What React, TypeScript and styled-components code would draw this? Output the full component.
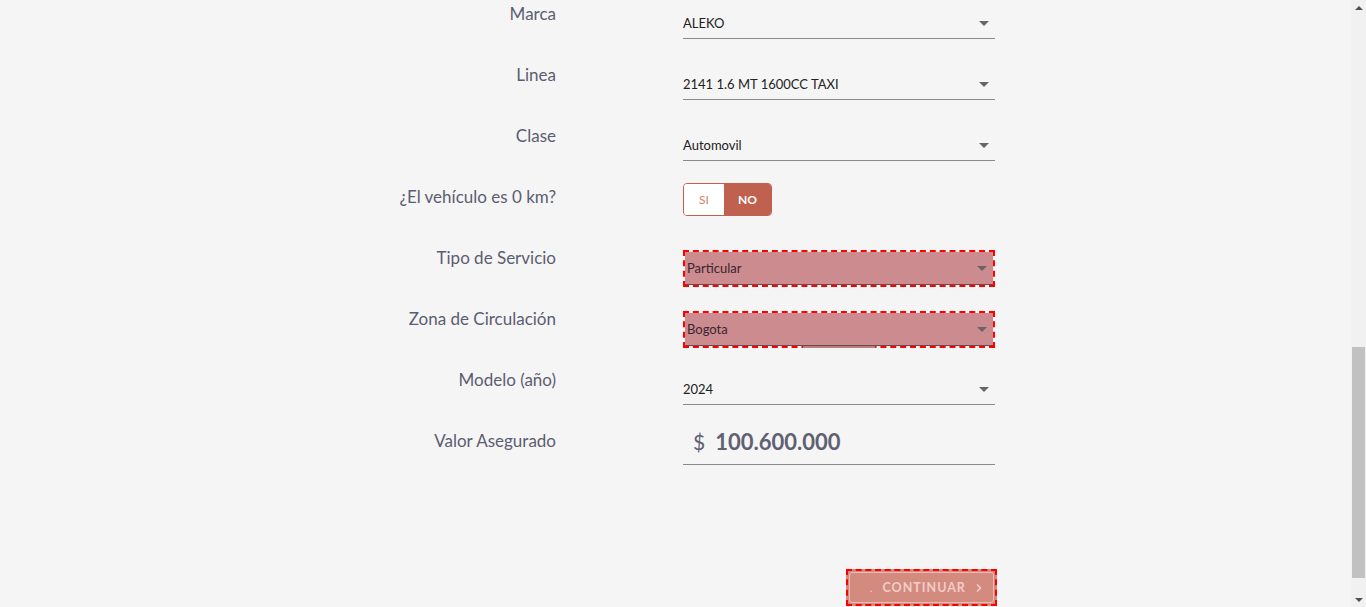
import { FC, useLayoutEffect, useRef } from "react";
import styled, { createGlobalStyle, css } from "styled-components";

const GlobalStyle = createGlobalStyle`
  html, body {
    margin: 0;
    padding: 0;
    background: #f5f5f5;
    font-family: "Source Sans Pro", Lato, "Liberation Sans", sans-serif;
  }
`;

const Page = styled.div`
  display: flex;
  height: 100vh;
`;

const Viewport = styled.div`
  flex: 1;
  height: 100%;
  overflow: hidden;
  background: #f5f5f5;
`;

const ScrollTrack = styled.div`
  width: 15px;
  display: flex;
  flex-direction: column;
  align-items: center;
  background: #f1f1f1;
`;

const ScrollArrow = styled.div<{ $down?: boolean }>`
  height: 15px;
  display: flex;
  align-items: center;
  justify-content: center;
  &::after {
    content: "";
    border-left: 4px solid transparent;
    border-right: 4px solid transparent;
    ${(p) =>
      p.$down
        ? "border-top: 4px solid #505050;"
        : "border-bottom: 4px solid #505050;"}
  }
`;

const ScrollGap = styled.div`
  flex: 1;
`;

const ScrollThumb = styled.div`
  width: 13px;
  height: 231px;
  margin-bottom: 14px;
  background: #c1c1c1;
`;

// lo que queda arriba del formulario (ya scrolleado)
const TopSpace = styled.div`
  height: 910px;
`;

const Form = styled.div`
  display: grid;
  grid-template-columns: 1fr 312px;
  column-gap: 127px;
  padding-right: 356px;
`;

const Label = styled.div`
  height: 61px;
  text-align: right;
  font-size: 17px;
  line-height: 28px;
  color: #5b5d71;
`;

const Field = styled.div`
  height: 61px;
`;

const SelectBox = styled.div<{ $flagged?: boolean }>`
  position: relative;
  height: 39px;
  display: flex;
  align-items: center;
  padding-top: 8px;
  box-sizing: border-box;
  border-bottom: 1px solid #8a8a8a;
  font-size: 13px;
  color: #222;

  ${(p) =>
    p.$flagged &&
    css`
      height: 33px;
      margin: 8px 2px 0;
      padding: 0 0 0 2px;
      background: #cc8b8f;
      border-bottom: 1px solid #6d4a4c;
      outline: 2px dashed #ff0000;
      color: #3a2530;
    `}
`;

const Caret = styled.span`
  margin-left: auto;
  margin-right: 6px;
  width: 0;
  height: 0;
  border-left: 5px solid transparent;
  border-right: 5px solid transparent;
  border-top: 5px solid #666;
`;

const TabStub = styled.div`
  position: absolute;
  left: 118px;
  bottom: -3px;
  width: 72px;
  height: 2px;
  background: #b97f7f;
`;

const Toggle = styled.div`
  display: inline-flex;
  height: 33px;
  border-radius: 4px;
  overflow: hidden;
  border: 1px solid #c0604f;
  box-sizing: border-box;
`;

const ToggleOption = styled.div<{ $active?: boolean }>`
  display: flex;
  align-items: center;
  justify-content: center;
  font-size: 12px;
  width: ${(p) => (p.$active ? "47px" : "40px")};
  background: ${(p) => (p.$active ? "#c0604f" : "#ffffff")};
  color: ${(p) => (p.$active ? "#ffffff" : "#cf7f6c")};
  font-weight: ${(p) => (p.$active ? 700 : 400)};
`;

const AmountBox = styled.div`
  height: 37px;
  display: flex;
  align-items: flex-start;
  gap: 10px;
  padding-left: 10px;
  line-height: 30px;
  border-bottom: 1px solid #8a8a8a;
  color: #5f6072;
`;

const Currency = styled.span`
  font-size: 21px;
`;

const Amount = styled.span`
  font-size: 22px;
  font-weight: 700;
`;

const Footer = styled.div`
  display: flex;
  justify-content: flex-end;
  padding: 81px 354px 1px 0;
`;

const ButtonFrame = styled.div`
  width: 151px;
  height: 37px;
  box-sizing: border-box;
  padding: 3px;
  outline: 2px dashed #ff0000;
  outline-offset: -2px;
  background: #d38b80;
`;

const ContinueButton = styled.button`
  width: 100%;
  height: 100%;
  display: flex;
  align-items: center;
  justify-content: center;
  gap: 9px;
  padding: 0 0 0 10px;
  border: 1px solid #e9bdb5;
  border-radius: 3px;
  background: #d38b80;
  color: #f1cdc6;
  font-family: inherit;
  font-size: 12.5px;
  font-weight: 700;
  letter-spacing: 1px;
  cursor: pointer;
`;

const Dot = styled.span`
  font-size: 10px;
`;

type SelectProps = {
  value: string;
  flagged?: boolean;
  stub?: boolean;
};

const Select: FC<SelectProps> = ({ value, flagged, stub }) => (
  <SelectBox $flagged={flagged}>
    {value}
    <Caret />
    {stub && <TabStub />}
  </SelectBox>
);

export default function App() {
  const ref = useRef<HTMLDivElement>(null);

  useLayoutEffect(() => {
    if (ref.current) ref.current.scrollTop = ref.current.scrollHeight;
  }, []);

  return (
    <>
      <GlobalStyle />
      <Page>
        <Viewport ref={ref}>
          <TopSpace />
          <Form>
            <Label>Marca</Label>
            <Field>
              <Select value="ALEKO" />
            </Field>

            <Label>Linea</Label>
            <Field>
              <Select value="2141 1.6 MT 1600CC TAXI" />
            </Field>

            <Label>Clase</Label>
            <Field>
              <Select value="Automovil" />
            </Field>

            <Label>¿El vehículo es 0 km?</Label>
            <Field>
              <Toggle>
                <ToggleOption>SI</ToggleOption>
                <ToggleOption $active>NO</ToggleOption>
              </Toggle>
            </Field>

            <Label>Tipo de Servicio</Label>
            <Field>
              <Select value="Particular" flagged />
            </Field>

            <Label>Zona de Circulación</Label>
            <Field>
              <Select value="Bogota" flagged stub />
            </Field>

            <Label>Modelo (año)</Label>
            <Field>
              <Select value="2024" />
            </Field>

            <Label>Valor Asegurado</Label>
            <Field>
              <AmountBox>
                <Currency>$</Currency>
                <Amount>100.600.000</Amount>
              </AmountBox>
            </Field>
          </Form>
          <Footer>
            <ButtonFrame>
              <ContinueButton>
                <Dot>.</Dot>
                CONTINUAR
                <svg width="8" height="10" viewBox="0 0 8 10">
                  <path d="M2 1.5 L5.5 5 L2 8.5" stroke="#f1cdc6" strokeWidth="1.6" fill="none" />
                </svg>
              </ContinueButton>
            </ButtonFrame>
          </Footer>
        </Viewport>
        <ScrollTrack>
          <ScrollArrow />
          <ScrollGap />
          <ScrollThumb />
          <ScrollArrow $down />
        </ScrollTrack>
      </Page>
    </>
  );
}
